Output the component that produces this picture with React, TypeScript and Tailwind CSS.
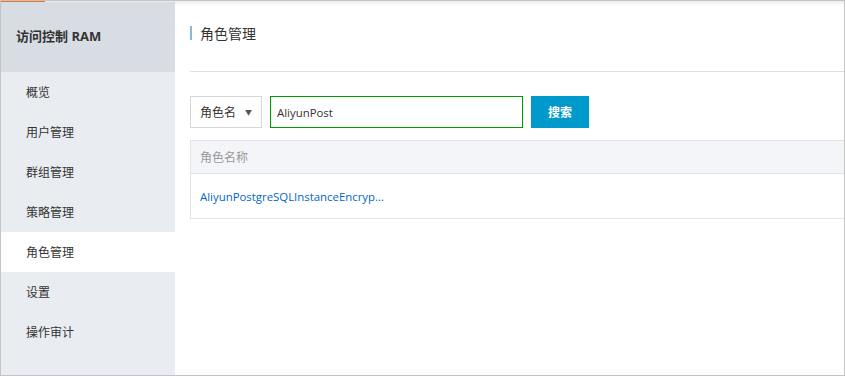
import React from "react";

const font = { fontFamily: '"Open Sans", "Noto Sans CJK SC", sans-serif' };

export default function App() {
  const items = ["概览", "用户管理", "群组管理", "策略管理", "角色管理", "设置", "操作审计"];
  return (
    <div
      className="w-[845px] h-[376px] border border-[#c4c4c4] flex flex-col overflow-hidden bg-white text-[#333]"
      style={font}
    >
      <div className="h-[1px] flex bg-[#ececec]">
        <div className="w-[44px] bg-[#e8742a]" />
      </div>
      <div className="flex flex-1 min-h-0">
        <div className="w-[174px] bg-[#e9ecf0] flex flex-col">
          <div className="h-[70px] bg-[#d8dde3] flex items-center pl-[15px] text-[13px] font-bold text-[#333]">
            访问控制 RAM
          </div>
          {items.map((t) => (
            <div
              key={t}
              className={
                t === "角色管理"
                  ? "h-[40px] flex items-center pt-[2px] pl-[25px] text-[12px] bg-white text-[#333]"
                  : "h-[40px] flex items-center pt-[2px] pl-[25px] text-[12px] text-[#333]"
              }
            >
              {t}
            </div>
          ))}
        </div>
        <div className="flex-1 pl-[15px] relative">
          <div className="absolute left-0 right-0 top-0 h-[4px] bg-gradient-to-b from-[#efefef] to-white" />
          <div className="h-[70px] pt-[24px] border-b border-[#e0e0e0] relative">
            <div className="flex items-start h-[16px]">
              <div className="w-[2px] h-[14px] bg-[#88b7e0]" />
              <div className="ml-[8px] text-[14px] leading-[16px] text-[#333]">角色管理</div>
            </div>
          </div>
          <div className="mt-[24px] flex h-[32px]">
            <div className="w-[72px] h-[32px] border border-[#d7d7d7] flex items-center pt-[2px] pl-[9px] pr-[9px] justify-between text-[12px]">
              <span>角色名</span>
              <span className="text-[7px] text-[#555]">▼</span>
            </div>
            <div className="ml-[8px] w-[253px] h-[32px] border border-[#009900] flex items-center pt-[2px] pl-[6px] text-[11.4px] text-[#333]">
              AliyunPost
            </div>
            <div className="ml-[8px] w-[58px] h-[32px] bg-[#0099cc] text-white text-[12px] font-bold flex items-center justify-center pt-[1px]">
              搜索
            </div>
          </div>
          <div className="mt-[12px] border border-r-0 border-[#e1e3e8]">
            <div className="h-[33px] bg-[#f4f5f9] border-b border-[#e1e3e8] flex items-center pt-[2px] pl-[9px] text-[12px] text-[#999]">
              角色名称
            </div>
            <div className="h-[44px] flex items-center pt-[2px] pl-[9px] text-[11.4px] text-[#0066cc]">
              AliyunPostgreSQLInstanceEncryp...
            </div>
          </div>
        </div>
      </div>
    </div>
  );
}
